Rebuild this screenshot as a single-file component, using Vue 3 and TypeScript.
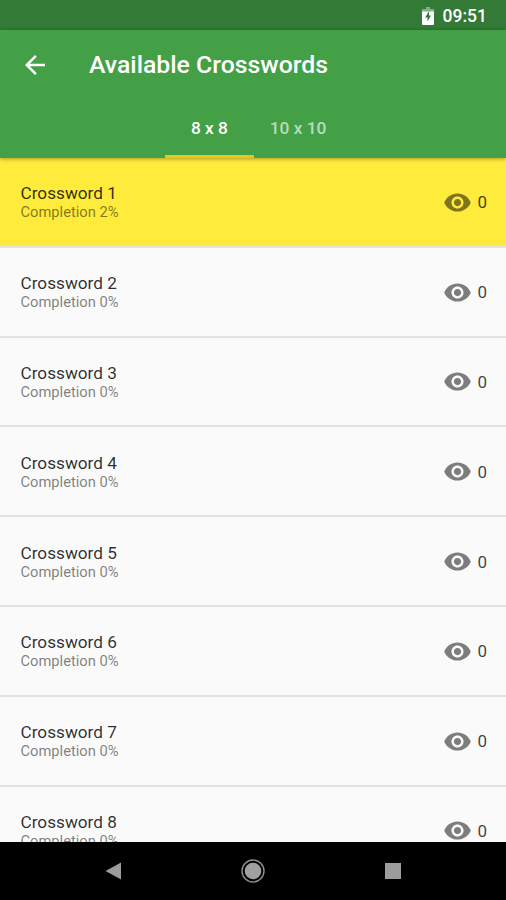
<script setup lang="ts">
interface Crossword {
  id: number
  completion: number
  views: number
}

const crosswords: Crossword[] = Array.from({ length: 8 }, (_, i) => ({
  id: i + 1,
  completion: i === 0 ? 2 : 0,
  views: 0,
}))
</script>

<template>
  <div class="screen">
    <div class="status">
      <svg class="battery" viewBox="0 0 12 18">
        <path fill="#fff" fill-opacity="0.4" d="M4 0h4v2h4v3H0V2h4z" />
        <path fill="#fff" d="M0 4.500h12V17a1 1 0 0 1-1 1H1a1 1 0 0 1-1-1z" />
        <path fill="#337a36" d="M7 4 3.200 10.500h2.300V14.500l3.500-6H7z" />
      </svg>
      <span class="clock">09:51</span>
    </div>
    <header class="header">
      <div class="toolbar">
        <svg class="back" viewBox="0 0 24 24">
          <path fill="#fff" d="M20 11H7.830l5.590-5.590L12 4l-8 8 8 8 1.410-1.410L7.830 13H20v-2z" />
        </svg>
        <h1 class="title">Available Crosswords</h1>
      </div>
      <nav class="tabs">
        <div class="tab active"><span>8 x 8</span></div>
        <div class="tab"><span>10 x 10</span></div>
      </nav>
    </header>
    <main class="list">
      <div v-for="c in crosswords" :key="c.id" class="row" :class="{ current: c.id === 1 }">
        <div class="info">
          <div class="name">Crossword {{ c.id }}</div>
          <div class="completion">Completion {{ c.completion }}%</div>
        </div>
        <svg class="eye" viewBox="0 0 24 24">
          <path d="M12 4.500C7 4.500 2.730 7.610 1 12c1.730 4.390 6 7.500 11 7.500s9.270-3.110 11-7.500c-1.730-4.390-6-7.500-11-7.500zM12 17c-2.760 0-5-2.240-5-5s2.240-5 5-5 5 2.240 5 5-2.240 5-5 5zm0-8c-1.660 0-3 1.340-3 3s1.340 3 3 3 3-1.340 3-3-1.340-3-3-3z" />
        </svg>
        <span class="views">{{ c.views }}</span>
      </div>
    </main>
    <footer class="navbar">
      <svg viewBox="0 0 24 24"><path fill="#9c9c9c" d="M4.500 12 20 3.500v17z" /></svg>
      <svg viewBox="0 0 24 24">
        <circle cx="12" cy="12" r="11" fill="none" stroke="#8f8f8f" stroke-width="1.400" />
        <circle cx="12" cy="12" r="8.300" fill="#a0a0a0" />
      </svg>
      <svg viewBox="0 0 24 24"><path fill="#9c9c9c" d="M4 4h16v16H4z" /></svg>
    </footer>
  </div>
</template>

<style>
body {
  overflow: hidden;
}
</style>

<style scoped>
.screen {
  display: flex;
  flex-direction: column;
  width: 506px;
  height: 900px;
  overflow: hidden;
  background: #fafafa;
  font-family: Roboto, "Liberation Sans", sans-serif;
}
.status {
  flex: none;
  display: flex;
  align-items: center;
  justify-content: flex-end;
  gap: 8.500px;
  height: 30px;
  padding: 2px 19px 0 0;
  box-sizing: border-box;
  background: #337a36;
  color: #fff;
}
.battery {
  width: 12px;
  height: 18px;
}
.clock {
  font-size: 17.500px;
  font-weight: 500;
  line-height: 24px;
}
.header {
  position: relative;
  z-index: 1;
  flex: none;
  height: 128px;
  background: #43a047;
  box-shadow: 0 1px 4px rgba(0, 0, 0, 0.35);
}
.toolbar {
  display: flex;
  align-items: center;
  height: 69px;
  padding-left: 20px;
}
.back {
  width: 30px;
  height: 30px;
}
.title {
  margin: 0 0 0 39px;
  color: #fff;
  font-size: 24.800px;
  font-weight: 500;
  line-height: 30px;
}
.tabs {
  display: flex;
  justify-content: center;
  height: 59px;
  padding-left: 1.500px;
}
.tab {
  display: flex;
  align-items: center;
  justify-content: center;
  width: 88.700px;
  padding-top: 1px;
  box-sizing: border-box;
  border-bottom: 3px solid transparent;
  color: rgba(255, 255, 255, 0.65);
  font-size: 17.300px;
  font-weight: 500;
  white-space: nowrap;
}
.tab.active {
  border-bottom-color: #e9c51f;
  color: #fff;
}
.list {
  flex: none;
  height: 684px;
  overflow: hidden;
}
.row {
  display: flex;
  align-items: center;
  height: 89.800px;
  padding: 1px 19px 0 20.500px;
  box-sizing: border-box;
  border-bottom: 2px solid #e2e2e2;
}
.row.current {
  background: #ffeb3b;
}
.info {
  flex: 1;
}
.name {
  color: rgba(0, 0, 0, 0.82);
  font-size: 17.200px;
  line-height: 20px;
}
.completion {
  color: rgba(0, 0, 0, 0.5);
  font-size: 14.700px;
  line-height: 18px;
}
.eye {
  width: 29px;
  height: 29px;
  margin-right: 5.500px;
  fill: rgba(0, 0, 0, 0.5);
}
.views {
  color: rgba(0, 0, 0, 0.75);
  font-size: 17px;
}
.navbar {
  flex: none;
  display: flex;
  align-items: center;
  justify-content: center;
  gap: 116px;
  height: 58px;
  background: #000;
}
.navbar svg {
  width: 24px;
  height: 24px;
}
</style>
